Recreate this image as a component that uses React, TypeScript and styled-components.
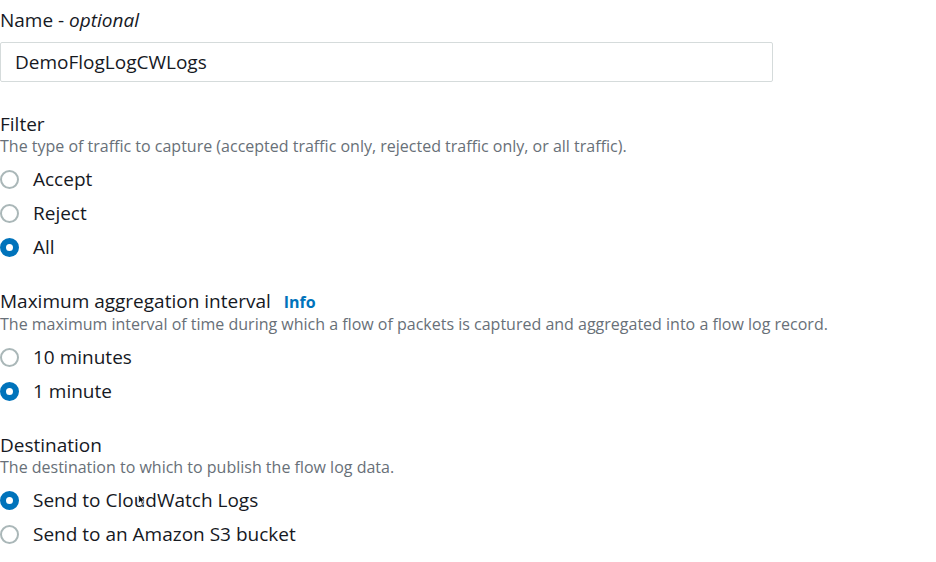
import * as React from 'react';
import styled, { createGlobalStyle } from 'styled-components';

const GlobalStyle = createGlobalStyle`
  html, body {
    margin: 0;
    padding: 0;
    background: #ffffff;
  }
  body {
    font-family: 'Open Sans', 'Liberation Sans', sans-serif;
    color: #16191f;
  }
`;

type Option = { label: string; checked?: boolean };

const filterOptions: Option[] = [
  { label: 'Accept' },
  { label: 'Reject' },
  { label: 'All', checked: true },
];

const intervalOptions: Option[] = [
  { label: '10 minutes' },
  { label: '1 minute', checked: true },
];

const destinationOptions: Option[] = [
  { label: 'Send to CloudWatch Logs', checked: true },
  { label: 'Send to an Amazon S3 bucket' },
];

const RadioGroup = ({ options }: { options: Option[] }) => (
  <Options>
    {options.map((o) => (
      <RadioRow key={o.label}>
        <RadioDot checked={!!o.checked} />
        <RadioLabel>{o.label}</RadioLabel>
      </RadioRow>
    ))}
  </Options>
);

const App = () => {
  return (
    <Page>
      <GlobalStyle />
      <Field>
        <Label>
          Name - <em>optional</em>
        </Label>
        <TextInput>DemoFlogLogCWLogs</TextInput>
      </Field>

      <Field>
        <Label>Filter</Label>
        <Description>
          The type of traffic to capture (accepted traffic only, rejected traffic only, or all traffic).
        </Description>
        <RadioGroup options={filterOptions} />
      </Field>

      <Field>
        <Label>
          Maximum aggregation interval <InfoLink>Info</InfoLink>
        </Label>
        <Description>
          The maximum interval of time during which a flow of packets is captured and aggregated into a flow log record.
        </Description>
        <RadioGroup options={intervalOptions} />
      </Field>

      <Field>
        <Label>Destination</Label>
        <Description>The destination to which to publish the flow log data.</Description>
        <CursorWrap>
          <RadioGroup options={destinationOptions} />
          {/* mouse pointer caught in the capture */}
          <Cursor viewBox="0 0 12 18" width="8" height="12">
            <path d="M1 1 L1 14 L4 11 L6.5 16.5 L8.5 15.5 L6 10.5 L10 10.5 Z" fill="#111" stroke="#fff" strokeWidth="1" />
          </Cursor>
        </CursorWrap>
      </Field>
    </Page>
  );
};

const Page = styled.div`
  width: 936px;
  height: 562px;
  box-sizing: border-box;
  padding: 7px 0 0 0;
  display: flex;
  flex-direction: column;
  gap: 28px;
  overflow: hidden;
`;

const Field = styled.div`
  display: flex;
  flex-direction: column;
`;

const Label = styled.div`
  font-size: 19px;
  line-height: 26px;
  color: #16191f;

  & em {
    font-style: italic;
  }
`;

const InfoLink = styled.span`
  margin-left: 8px;
  font-size: 16px;
  font-weight: 700;
  color: #0073bb;
`;

const Description = styled.div`
  margin-top: -1px;
  font-size: 16px;
  line-height: 20px;
  color: #687078;
`;

const TextInput = styled.div`
  margin-top: 9px;
  margin-bottom: 1px;
  width: 773px;
  height: 40px;
  box-sizing: border-box;
  border: 1px solid #d5dbdb;
  border-radius: 2px;
  padding: 0 14px;
  display: flex;
  align-items: center;
  font-size: 19px;
  color: #16191f;
`;

const Options = styled.div`
  display: flex;
  flex-direction: column;
  gap: 8px;
  margin-top: 10px;
`;

const RadioRow = styled.div`
  display: flex;
  align-items: center;
  gap: 14px;
  height: 26px;
`;

const RadioDot = styled.span<{ checked: boolean }>`
  width: 19px;
  height: 19px;
  box-sizing: border-box;
  border-radius: 50%;
  flex-shrink: 0;
  background: #ffffff;
  border: ${(p) => (p.checked ? '6px solid #0073bb' : '2px solid #aab7b8')};
`;

const RadioLabel = styled.span`
  font-size: 19px;
  color: #16191f;
`;

const CursorWrap = styled.div`
  position: relative;
`;

const Cursor = styled.svg`
  position: absolute;
  left: 138px;
  top: 17px;
`;

export default App;
